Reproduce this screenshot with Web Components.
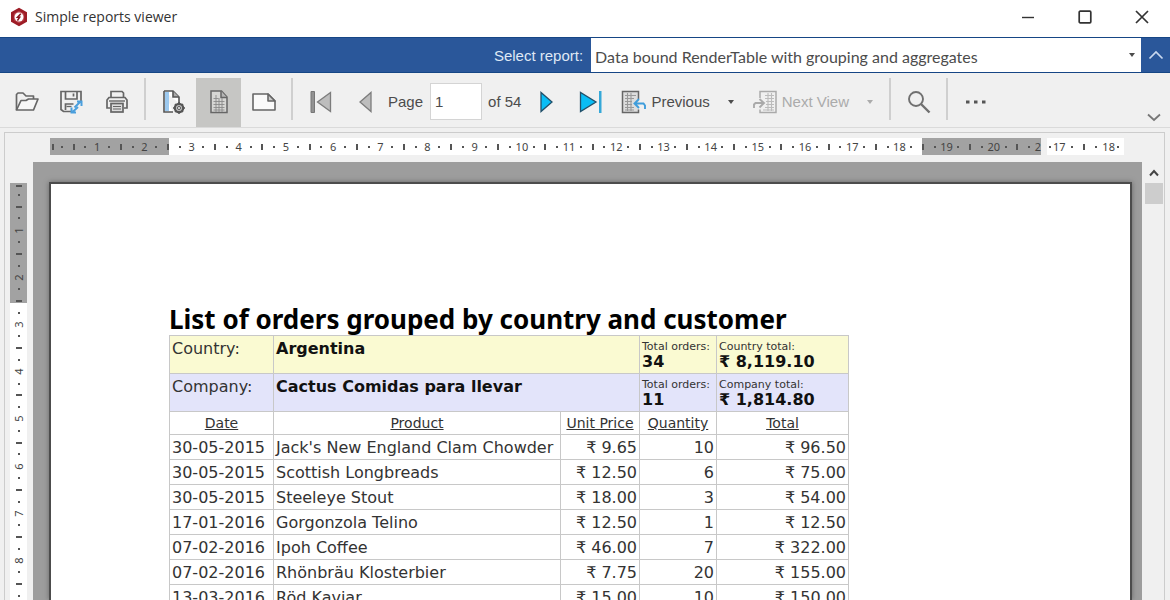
<!DOCTYPE html>
<html lang="en">
<head>
<meta charset="utf-8">
<title>Simple reports viewer</title>
<style>
  html, body { height: 100%; margin: 0; overflow: hidden; }
  body { font: 15px/20px "Liberation Sans", Arial, sans-serif; color: #4c4c4c; background: #f0f0f0; }
</style>
</head>
<body>
<reports-app></reports-app>

<script>
const ICONS = {
  logo: '<svg width="20" height="20" viewBox="0 0 20 20"><path d="M10 .8 18 5.2v9.6L10 19.2 2 14.800V5.200Z" fill="#9d1c26"/><path d="M10 3.800 15.200 6.800v6.400L10 16.200 4.800 13.200V6.800Z" fill="#b9434b"/><circle cx="10" cy="10" r="4.500" fill="#fff"/><path d="M11.800 6.800 8.600 10.200h2L8.400 13.600" fill="none" stroke="#8a1620" stroke-width="1.600"/></svg>',
  minimize: '<svg width="14" height="14" viewBox="0 0 14 14"><path d="M1 7.500h12" stroke="#333" stroke-width="1.400"/></svg>',
  maximize: '<svg width="14" height="14" viewBox="0 0 14 14"><rect x="1.200" y="1.200" width="11.600" height="11.600" rx="1" fill="none" stroke="#333" stroke-width="1.700"/></svg>',
  close: '<svg width="14" height="14" viewBox="0 0 14 14"><path d="m1 1 12 12M13 1 1 13" stroke="#333" stroke-width="1.700"/></svg>',
  collapse: '<svg width="16" height="10" viewBox="0 0 16 10"><path d="m1.500 8.500 6.500-6.500 6.500 6.500" fill="none" stroke="#c9d8ee" stroke-width="1.700"/></svg>',
  expand: '<svg width="14" height="9" viewBox="0 0 14 9"><path d="m1 1.500 6 5.500 6-5.500" fill="none" stroke="#777" stroke-width="1.800"/></svg>',
  scrollup: '<svg width="10" height="8" viewBox="0 0 10 8"><path d="m1 6.500 4-4.500 4 4.500" fill="none" stroke="#444" stroke-width="2"/></svg>',
  caret: '<svg width="6" height="4" viewBox="0 0 6 4"><path d="M0 0h6L3 4z" fill="currentColor"/></svg>',
  open: '<svg width="24" height="22" viewBox="0 0 24 22" fill="none" stroke="#666" stroke-width="1.700" stroke-linejoin="round"><path d="M1.500 19V3.500L3 2h5l3 3h7.500v4"/><path d="M1.500 19 6 9.500h5l2.500-1.500H23L18.500 19z" fill="#f6f6f6"/></svg>',
  save: '<svg width="26" height="24" viewBox="0 0 26 24" fill="none" stroke="#666" stroke-width="1.700"><path d="M13 21.500H4.500l-2.500-2V1.500h20V12"/><path d="M6.500 2v7h11.500V2M14.500 3.500v3M6.500 20v-6h8"/><path d="M7.500 16.500h5" stroke-width="1.300"/><path d="m15.500 17.500 6-6M18 11.500h4.500V16" stroke="#4b9fdd" stroke-width="2"/><path d="m13 22.500 6-5.500M12.500 17.500v5H17" stroke="#4b9fdd" stroke-width="2"/></svg>',
  print: '<svg width="24" height="24" viewBox="0 0 24 24" fill="none" stroke="#666" stroke-width="1.700"><path d="M6 7.500v-6h11L18.500 3v4.500"/><path d="M5 18H2v-8l2-2.500h16l2 2.500v8h-3"/><rect x="6" y="13.500" width="12" height="8.500" fill="#ddd"/><path d="M8 16.500h8M8 19h8" stroke-width="1.200"/><path d="M4 11h16" stroke-width="1.400"/></svg>',
  setup: '<svg width="24" height="26" viewBox="0 0 24 26" fill="none" stroke="#555" stroke-width="1.600"><path d="M2 2h9l6 6v6M11 23H2V2" fill="#fff"/><path d="M3 3h4v19H3z" fill="#9cc9ef" stroke="none"/><path d="M11 2v6h6" fill="#aaa"/><circle cx="17" cy="19" r="4.200" fill="#bbb" stroke-width="2.200"/><circle cx="17" cy="19" r="1.500" fill="#fff" stroke-width="1"/><path d="M17 13v2M17 23v2M11 19h2M21 19h2M13 15l1.500 1.500M21 15l-1.500 1.500M13 23l1.500-1.500M21 23l-1.500-1.500" stroke-width="1.500"/></svg>',
  portrait: '<svg width="20" height="26" viewBox="0 0 20 26" fill="none" stroke="#666" stroke-width="1.500"><path d="M2 2h10.500L18 8v15.500H2z" fill="#d6d6d4"/><path d="M12 2v6.500h6" fill="#b5b5b5"/><path d="M4.500 9.500h5M4.500 12.500h11M4.500 15.500h11M4.500 18.500h11M4.500 21h11M7 6v17M10 9v14M13 9v14" stroke="#8b8b8b" stroke-width=".9"/></svg>',
  landscape: '<svg width="26" height="20" viewBox="0 0 26 20" fill="none" stroke="#666" stroke-width="1.600" stroke-linejoin="round"><path d="M2 2h15l7 7v9H2z" fill="#fafafa"/><path d="M17 2v7h7z" fill="#ccc"/></svg>',
  first: '<svg width="24" height="24" viewBox="0 0 24 24"><path d="M2 1.500h3.500v21H2z" fill="#929292" stroke="#777"/><path d="M21.500 2.500v19L8.500 12z" fill="#bdbdbd" stroke="#7c7c7c" stroke-width="1.300"/></svg>',
  prev: '<svg width="16" height="24" viewBox="0 0 16 24"><path d="M13 2.500v19L2 12z" fill="#bdbdbd" stroke="#7c7c7c" stroke-width="1.300"/></svg>',
  next: '<svg width="16" height="24" viewBox="0 0 16 24"><path d="M3 2.500v19L14 12z" fill="#0abdf5" stroke="#22506a" stroke-width="1.300"/></svg>',
  last: '<svg width="24" height="24" viewBox="0 0 24 24"><path d="M1.500 2.500v19L17 12z" fill="#0abdf5" stroke="#22506a" stroke-width="1.300"/><path d="M20 1h2.500v22H20z" fill="#35a8d8"/></svg>',
  previous: '<svg width="26" height="24" viewBox="0 0 26 24" fill="none" stroke="#666" stroke-width="1.500"><path d="M17.500 9V1.500h-16v21h16v-3" fill="#ddd"/><path d="M4 5.500h11M4 8.500h9M4 11.500h7M4 14.500h7M4 17.500h9M4 20h9M6.500 3v18M10 3v18" stroke="#999" stroke-width="1.100"/><path d="M24 19v-3.500l-1.500-2H14M18 9l-4.500 4.500L18 18" stroke="#3f9ddb" stroke-width="1.900"/></svg>',
  nextview: '<svg width="26" height="24" viewBox="0 0 26 24" fill="none" stroke="#aaa" stroke-width="1.500"><path d="M8 8V1.500h16v21H8v-3"/><path d="M13 5.500h9M13 8.500h9M14 11.500h8M14 14.500h8M13 17.500h9M11 20h11M16 3v18M19.500 3v18" stroke="#bcbcbc" stroke-width="1.100"/><path d="M2 18v-3.500l1.500-1.500H11M7.500 9l4.500 4-4.500 4.500" stroke-width="1.900"/></svg>',
  search: '<svg width="24" height="24" viewBox="0 0 24 24" fill="none" stroke="#707070"><circle cx="9" cy="9" r="7" stroke-width="1.900"/><path d="m14 14 8.500 8.500" stroke-width="2.400"/></svg>',
  more: '<svg width="20" height="4" viewBox="0 0 20 4"><path d="M0 .5h3.500v3H0zM8 .5h3.500v3H8zM16 .5h3.500v3H16z" fill="#555"/></svg>'
};

class BaseElement extends HTMLElement {
  render(html) {
    const t = document.createElement('template');
    t.innerHTML = html;
    this.attachShadow({ mode: 'open' }).appendChild(t.content.cloneNode(true));
  }
}

/* Button with an icon and, optionally, a slotted caption and drop-down caret. */
class ToolButton extends BaseElement {
  connectedCallback() {
    if (this.shadowRoot) return;
    const wide = this.hasAttribute('caption');
    this.render(`<style>
      :host { display: flex; flex: none; }
      button { all: unset; box-sizing: border-box; width: 45px; padding-bottom: 2px; display: flex; align-items: center; justify-content: center; gap: 4px; white-space: nowrap; }
      :host([caption]) button { width: auto; }
      :host([pressed]) button { background: #c6c6c4; }
      :host([disabled]) { color: #ababab; }
      .caret { display: flex; margin-left: 14px; }
      svg { flex: none; display: block; }
      button:focus-visible { outline: 1px solid #2a579a; }
    </style>
    <button type="button" aria-label="${this.getAttribute('label')}" ${this.hasAttribute('disabled') ? 'disabled' : ''}>
      ${ICONS[this.getAttribute('icon')]}<slot></slot>${wide ? `<span class="caret">${ICONS.caret}</span>` : ''}
    </button>`);
  }
}

class ToolSeparator extends BaseElement {
  connectedCallback() {
    if (this.shadowRoot) return;
    this.render(`<style>:host { display: block; flex: none; width: 2px; height: 42px; margin: 0 5px; background: #cfcfcf; }</style>`);
  }
}

class TitleBar extends BaseElement {
  connectedCallback() {
    if (this.shadowRoot) return;
    this.render(`<style>
      :host { display: flex; align-items: center; height: 37px; padding: 0 0 4px 9px; box-sizing: border-box; background: #fff; color: #333; gap: 6px; }
      h1 { margin: 0; flex: 1; font: 14px/20px "Open Sans", "Noto Sans", sans-serif; }
      svg { display: block; }
      .controls { display: flex; }
      .controls button { all: unset; width: 57px; height: 32px; display: flex; align-items: center; justify-content: center; }
    </style>
    ${ICONS.logo}<h1><slot></slot></h1>
    <div class="controls">
      <button type="button" aria-label="Minimize">${ICONS.minimize}</button>
      <button type="button" aria-label="Maximize">${ICONS.maximize}</button>
      <button type="button" aria-label="Close">${ICONS.close}</button>
    </div>`);
  }
}

class ReportPicker extends BaseElement {
  connectedCallback() {
    if (this.shadowRoot) return;
    this.render(`<style>
      :host { display: flex; height: 36px; box-sizing: border-box; background: #2a579a; border-top: 1px solid #164685; border-bottom: 1px solid #164685; }
      label { flex: 1; align-self: center; padding: 2px 8px 0 0; text-align: right; color: #dfe8f5; }
      .field { width: 47%; display: flex; position: relative; background: #fff; }
      select { appearance: none; border: 0; margin: 0; flex: 1; padding: 4px 24px 0 4px; background: none; color: #4c4c4c; font: 16px/20px Lato, Arial, sans-serif; }
      .caret { position: absolute; right: 6px; top: 15px; pointer-events: none; }
      svg { display: block; }
      button { all: unset; width: 29px; display: flex; align-items: center; justify-content: center; }
    </style>
    <label for="report">Select report:</label>
    <div class="field">
      <select id="report"><option>Data bound RenderTable with grouping and aggregates</option></select>
      <span class="caret">${ICONS.caret}</span>
    </div>
    <button type="button" aria-label="Collapse">${ICONS.collapse}</button>`);
  }
}

class ViewerToolbar extends BaseElement {
  connectedCallback() {
    if (this.shadowRoot) return;
    this.render(`<style>
      :host { display: flex; box-sizing: border-box; height: 55px; padding: 5px 0 0 4px; background: #f0f0f0; border-bottom: 1px solid #dadada; }
      .tools { flex: 1; display: flex; align-items: stretch; }
      tool-separator { align-self: flex-start; }
      .page { display: flex; align-items: center; padding-bottom: 2px; margin-right: 2px; }
      input { box-sizing: border-box; width: 52px; height: 37px; margin: 0 6px 0 7px; padding: 0 4px; border: 1px solid #d4d4d4; background: #fff; font: inherit; color: inherit; outline: 0; }
      .fold { all: unset; align-self: flex-end; width: 32px; height: 14px; display: flex; justify-content: center; }
      svg { display: block; }
    </style>
    <div class="tools" role="toolbar" aria-label="Report">
      <tool-button icon="open" label="Open"></tool-button>
      <tool-button icon="save" label="Save"></tool-button>
      <tool-button icon="print" label="Print"></tool-button>
      <tool-separator></tool-separator>
      <tool-button icon="setup" label="Page setup"></tool-button>
      <tool-button icon="portrait" label="Portrait" pressed></tool-button>
      <tool-button icon="landscape" label="Landscape"></tool-button>
      <tool-separator></tool-separator>
      <tool-button icon="first" label="First page" disabled></tool-button>
      <tool-button icon="prev" label="Previous page" disabled></tool-button>
      <div class="page"><label for="page">Page</label><input id="page" value="1"><span>of 54</span></div>
      <tool-button icon="next" label="Next page"></tool-button>
      <tool-button icon="last" label="Last page"></tool-button>
      <tool-button icon="previous" label="Previous" caption style="margin-left:8px">Previous</tool-button>
      <tool-button icon="nextview" label="Next View" caption disabled style="margin-left:18px">Next View</tool-button>
      <tool-separator style="margin-left:16px"></tool-separator>
      <tool-button icon="search" label="Find"></tool-button>
      <tool-separator></tool-separator>
      <tool-button icon="more" label="More"></tool-button>
    </div>
    <button class="fold" type="button" aria-label="Fold toolbar">${ICONS.expand}</button>`);
  }
}

/* Centimetre ruler: one slot per quarter unit, with half slots at both ends. */
class PageRuler extends BaseElement {
  connectedCallback() {
    if (this.shadowRoot) return;
    const from = +this.getAttribute('from'), to = +this.getAttribute('to');
    let slots = '';
    for (let q = from * 4; q <= to * 4; q++) {
      const end = q === from * 4 || q === to * 4;
      const kind = q % 4 === 0 ? (q ? 'n' : 'b') : q % 2 === 0 ? 'b' : 'd';
      /* the half slot at the end of the paper has room for the first digit only */
      const label = end ? String(q / 4)[0] : q / 4;
      slots += `<span class="${kind}${end ? ' end' : ''}">${kind === 'n' ? `<i>${label}</i>` : '<b></b>'}</span>`;
    }
    this.render(`<style>
      :host { display: flex; box-sizing: border-box; height: 17px; overflow: hidden; background: #fff; font: 11px/17px "Noto Sans", sans-serif; color: #444; }
      span { flex: 2 1 0; min-width: 0; min-height: 0; display: flex; align-items: center; justify-content: center; }
      .end { flex-grow: 1; }
      i { font-style: normal; flex: none; }
      b { flex: none; background: #555; width: 2px; height: 2px; }
      .b b { height: 6px; }
      :host([vertical]) { flex-direction: column; width: 17px; height: 472px; }
      :host([vertical]) i { transform: rotate(-90deg); }
      :host([vertical]) .b b { height: 2px; width: 6px; }
    </style>${slots}`);
  }
}

class OrdersReport extends BaseElement {
  connectedCallback() {
    if (this.shadowRoot) return;
    const rows = [
      ['30-05-2015', "Jack's New England Clam Chowder", '9.65', 10, '96.50'],
      ['30-05-2015', 'Scottish Longbreads', '12.50', 6, '75.00'],
      ['30-05-2015', 'Steeleye Stout', '18.00', 3, '54.00'],
      ['17-01-2016', 'Gorgonzola Telino', '12.50', 1, '12.50'],
      ['07-02-2016', 'Ipoh Coffee', '46.00', 7, '322.00'],
      ['07-02-2016', 'Rhönbräu Klosterbier', '7.75', 20, '155.00'],
      ['13-03-2016', 'Röd Kaviar', '15.00', 10, '150.00']
    ];
    const group = (cls, name, value, count, total) => `<tr class="group ${cls}">
      <td>${name}:</td><td colspan="2"><strong>${value}</strong></td>
      <td><small>Total orders:</small><strong>${count}</strong></td>
      <td><small>${name} total:</small><strong>₹ ${total}</strong></td></tr>`;
    this.render(`<style>
      :host { display: block; color: #333; font: 16px/20px "DejaVu Sans", Verdana, sans-serif; }
      h2 { margin: 0; color: #000; font: bold 26px/32px "Noto Sans", Tahoma, sans-serif; white-space: nowrap; }
      table { table-layout: fixed; width: 680px; border-collapse: collapse; }
      td, th { box-sizing: border-box; border: 1px solid #c8c8c8; padding: 2px 2px 0; height: 25px; white-space: nowrap; }
      th { height: 23px; padding-top: 0; font-weight: normal; font-size: 14px; text-decoration: underline; }
      .group td { height: 38px; vertical-align: top; padding-top: 3px; line-height: 20px; }
      .country { background: #fafad2; }
      .company { background: #e3e4fa; }
      strong { display: block; color: #111; }
      small { display: block; font-size: 11px; line-height: 15px; }
      small + strong { line-height: 16px; }
      .num { text-align: right; }
    </style>
    <h2>List of orders grouped by country and customer</h2>
    <table>
      <colgroup><col style="width:104px"><col style="width:287px"><col style="width:79px"><col style="width:77px"><col></colgroup>
      <tbody>
        ${group('country', 'Country', 'Argentina', 34, '8,119.10')}
        ${group('company', 'Company', 'Cactus Comidas para llevar', 11, '1,814.80')}
        <tr><th>Date</th><th>Product</th><th>Unit Price</th><th>Quantity</th><th>Total</th></tr>
        ${rows.map(([d, p, u, q, t]) => `<tr><td>${d}</td><td>${p}</td><td class="num">₹ ${u}</td><td class="num">${q}</td><td class="num">₹ ${t}</td></tr>`).join('')}
      </tbody>
    </table>`);
  }
}

class PreviewPane extends BaseElement {
  connectedCallback() {
    if (this.shadowRoot) return;
    this.render(`<style>
      :host { display: grid; grid-template: 29px 1fr / 28px 1fr 22px; box-sizing: border-box; margin: 4px 5px 0 4px; border: 1px solid #ccc; border-bottom: 0; overflow: hidden; }
      .top { grid-column: 1 / 4; display: flex; gap: 6px; padding: 5px 40px 0 45px; }
      .top .main { flex: 1; background: linear-gradient(90deg, #a2a2a2 12%, #fff 12%, #fff 88%, #a2a2a2 88%); }
      .top .rest { width: 77px; padding-right: 3px; }
      .left { padding: 21px 0 0 5px; overflow: hidden; min-height: 0; }
      .left page-ruler { background: linear-gradient(#a2a2a2 120px, #fff 120px); }
      .canvas { min-height: 0; overflow: hidden; display: flex; padding: 20px 10px 0 16px; background: #9d9d9d; }
      .sheet { flex: 1; min-width: 0; box-sizing: border-box; padding: 119px 0 0 118px; background: #fff; border: 2px solid #4c4c4c; border-bottom: 0; box-shadow: 0 0 5px #666; overflow: hidden; }
      .scroll { display: flex; flex-direction: column; align-items: center; margin-left: 1px; background: #f0f0f0; }
      .scroll button { all: unset; height: 21px; width: 100%; display: flex; align-items: center; justify-content: center; }
      .thumb { width: 18px; height: 21px; background: #cdcdcd; }
      svg { display: block; }
    </style>
    <div class="top">
      <page-ruler class="main" from="0" to="21"></page-ruler>
      <page-ruler class="rest" from="16.75" to="18.25"></page-ruler>
    </div>
    <div class="left"><page-ruler from="0" to="10" vertical></page-ruler></div>
    <div class="canvas"><div class="sheet"><slot></slot></div></div>
    <div class="scroll"><button type="button" aria-label="Scroll up">${ICONS.scrollup}</button><div class="thumb"></div></div>`);
  }
}

class ReportsApp extends BaseElement {
  connectedCallback() {
    if (this.shadowRoot) return;
    this.render(`<style>
      :host { display: flex; flex-direction: column; height: 100vh; }
      preview-pane { flex: 1; min-height: 0; }
    </style>
    <title-bar>Simple reports viewer</title-bar>
    <report-picker></report-picker>
    <viewer-toolbar></viewer-toolbar>
    <preview-pane><orders-report></orders-report></preview-pane>`);
  }
}

customElements.define('tool-button', ToolButton);
customElements.define('tool-separator', ToolSeparator);
customElements.define('title-bar', TitleBar);
customElements.define('report-picker', ReportPicker);
customElements.define('viewer-toolbar', ViewerToolbar);
customElements.define('page-ruler', PageRuler);
customElements.define('orders-report', OrdersReport);
customElements.define('preview-pane', PreviewPane);
customElements.define('reports-app', ReportsApp);
</script>
</body>
</html>
